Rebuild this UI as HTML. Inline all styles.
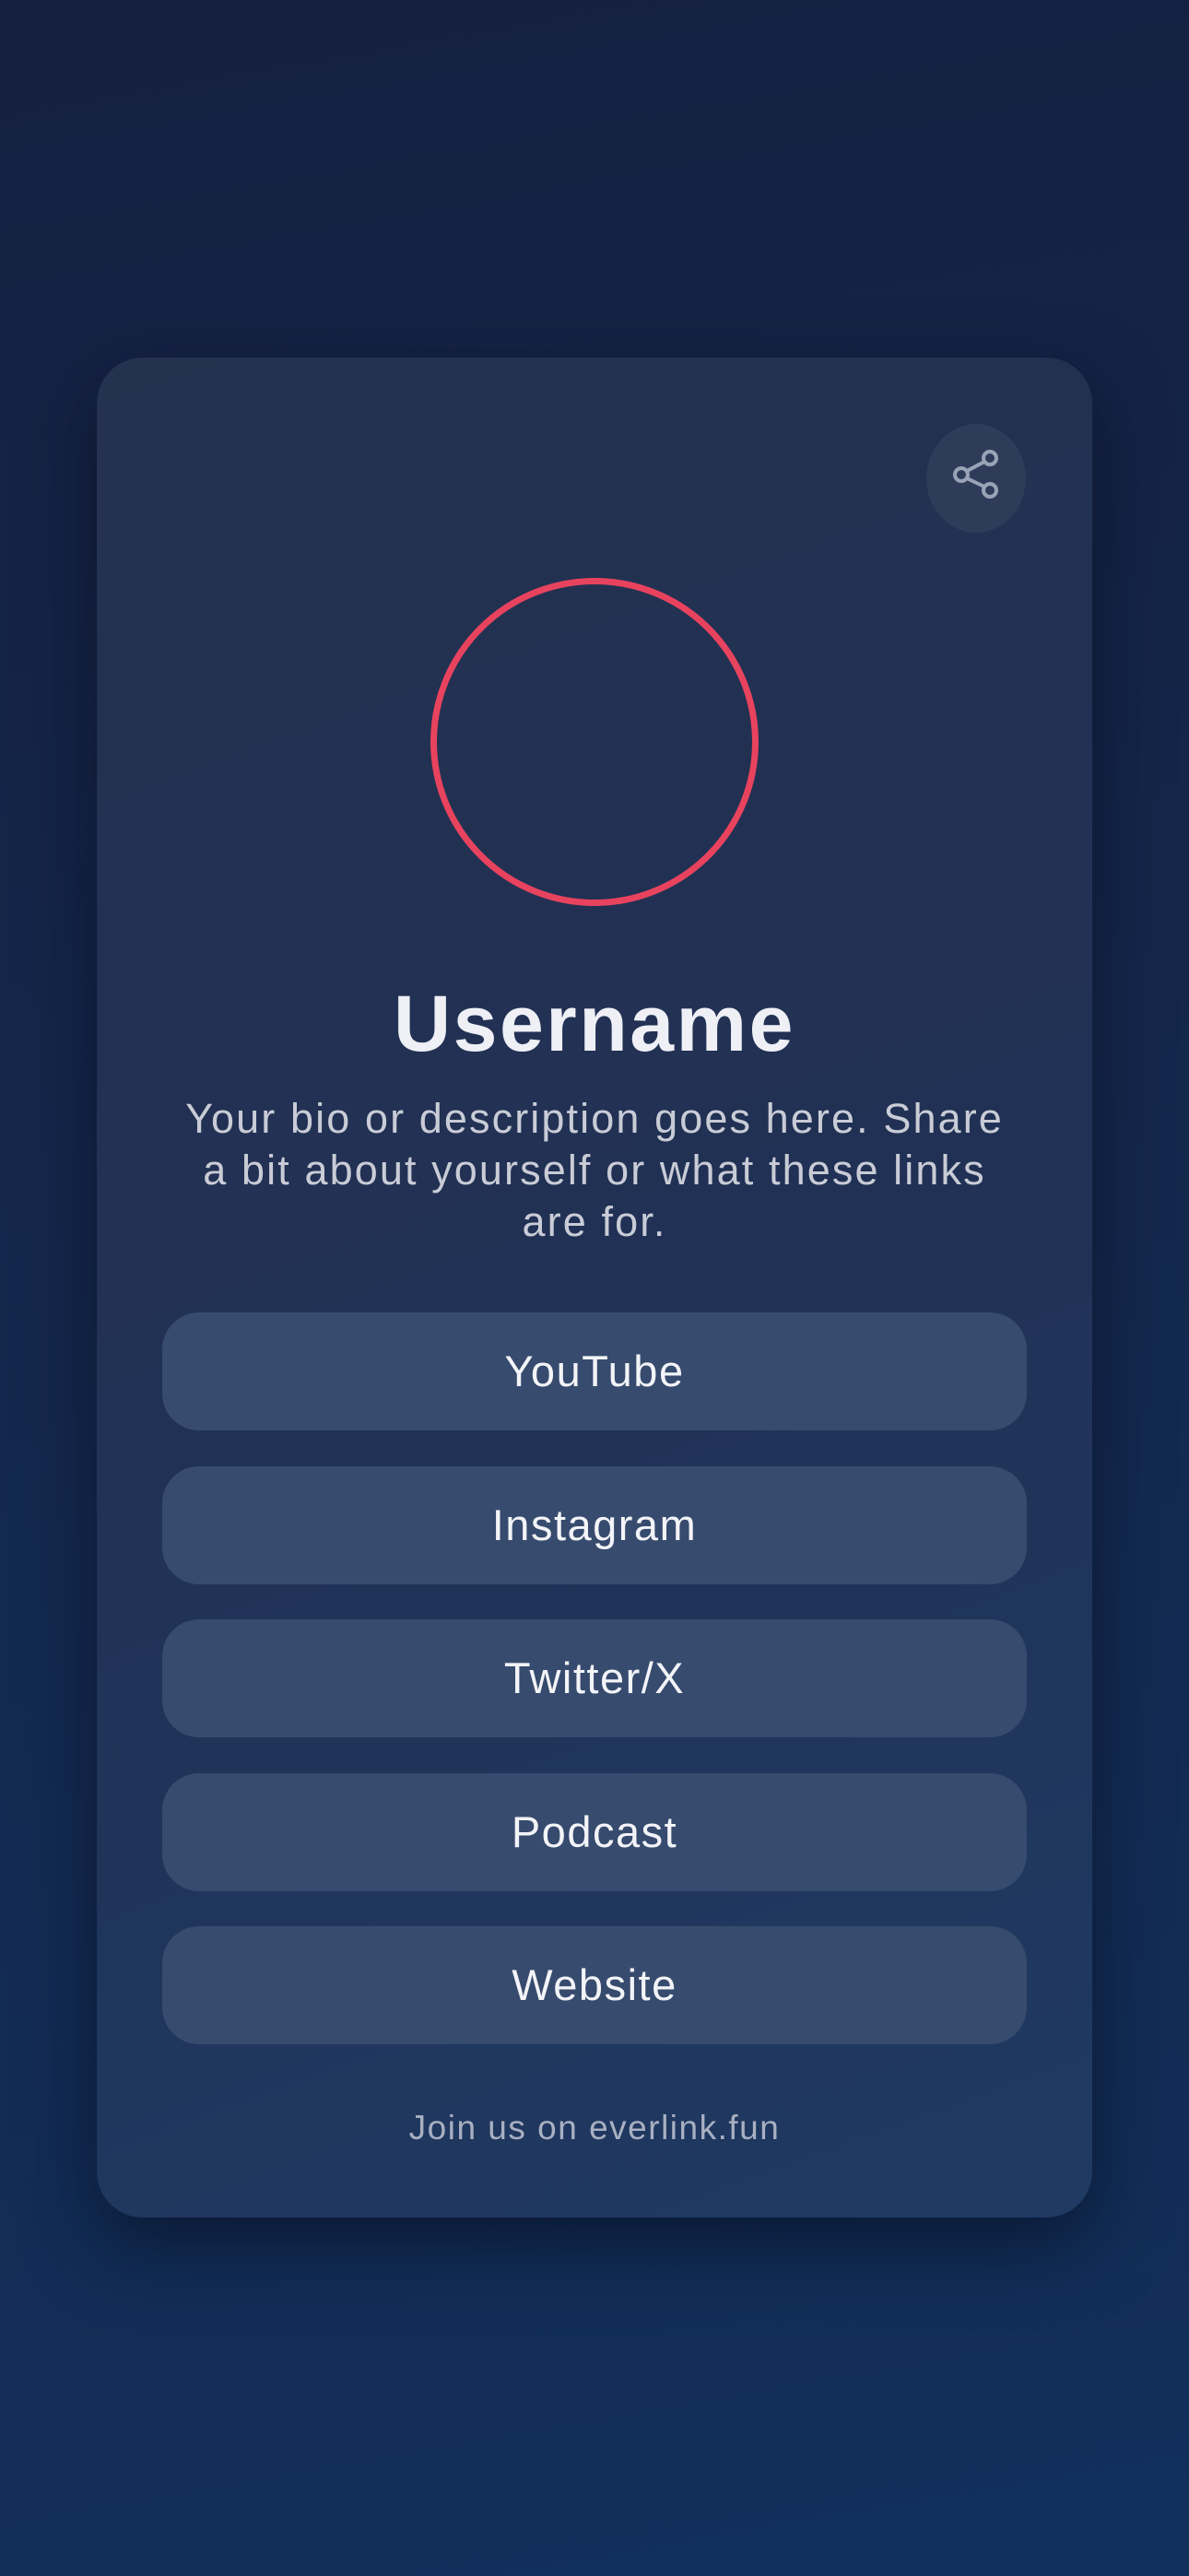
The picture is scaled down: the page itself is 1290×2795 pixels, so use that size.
<!DOCTYPE html>
<html><head><style>
html,body{margin:0;padding:0}
body{width:1290px;height:2795px;background:linear-gradient(170deg,#152040 0%,#14284d 50%,#11305c 100%);font-family:"Liberation Sans",sans-serif;position:relative;overflow:hidden}
.card{position:absolute;left:105px;top:388px;width:1080px;height:2018px;border-radius:50px;background:linear-gradient(160deg,#24314f 0%,#213155 50%,#1f3a63 100%);box-shadow:0 30px 80px rgba(5,10,25,.55)}
.share{position:absolute;left:900px;top:72px;width:108px;height:118px;border-radius:50%;background:#2e3c5a}
.share svg{position:absolute;left:0;top:0}
.av{position:absolute;left:362px;top:239px;width:342px;height:342px;border:7px solid #e8435e;border-radius:50%}
h1{position:absolute;top:668px;left:0;width:1080px;margin:0;text-align:center;color:#eef0f6;font-size:86px;font-weight:bold;line-height:110px;letter-spacing:2.5px}
.bio{position:absolute;top:798px;left:0;width:1080px;text-align:center;color:#c9ccd6;font-size:45px;line-height:56px;letter-spacing:2.1px;white-space:nowrap}
.btn{position:absolute;left:71px;width:938px;height:128px;border-radius:40px;background:#374b6e;color:#f3f4f8;font-size:47px;text-align:center;line-height:128px;letter-spacing:1.5px}
.foot{position:absolute;top:1900px;left:0;width:1080px;text-align:center;color:#a9b0c2;font-size:37px;letter-spacing:1.5px}
</style></head><body>
<div class="card">
<div class="share"><svg width="108" height="118" viewBox="0 0 108 118"><g fill="none" stroke="#9aa3b6" stroke-width="4"><circle cx="69" cy="37" r="7"/><circle cx="38" cy="55" r="7"/><circle cx="69" cy="72" r="7"/><line x1="44" y1="51" x2="63" y2="41"/><line x1="44" y1="59" x2="63" y2="68"/></g></svg></div>
<div class="av"></div>
<h1>Username</h1>
<div class="bio">Your bio or description goes here. Share<br>a bit about yourself or what these links<br>are for.</div>
<div class="btn" style="top:1036px">YouTube</div>
<div class="btn" style="top:1203px">Instagram</div>
<div class="btn" style="top:1369px">Twitter/X</div>
<div class="btn" style="top:1536px">Podcast</div>
<div class="btn" style="top:1702px">Website</div>
<div class="foot">Join us on everlink.fun</div>
</div>
</body></html>
